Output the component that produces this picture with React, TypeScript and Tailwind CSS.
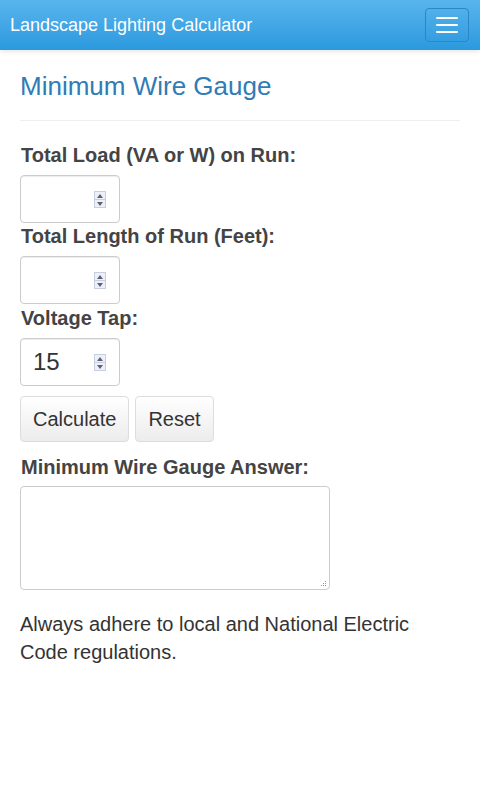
function Spinner() {
  return (
    <div className="absolute left-[73px] top-[15px] flex h-[17px] w-[12px] flex-col border border-[#c9cde0] bg-[#eef0f7]">
      <div className="flex flex-1 items-center justify-center border-b border-[#c9cde0]">
        <svg width="6" height="4" viewBox="0 0 6 4"><path d="M0 4 L3 0 L6 4 Z" fill="#5b6178" /></svg>
      </div>
      <div className="flex flex-1 items-center justify-center">
        <svg width="6" height="4" viewBox="0 0 6 4"><path d="M0 0 L3 4 L6 0 Z" fill="#5b6178" /></svg>
      </div>
    </div>
  );
}

function NumberField({ value }: { value?: string }) {
  return (
    <div className="relative h-[48px] w-[100px] rounded-[4px] border border-[#ccc] bg-white shadow-[inset_0_1px_1px_rgba(0,0,0,0.075)]">
      <span className="absolute left-[12px] top-[9px] text-[24px] leading-[28px] text-[#333]">{value}</span>
      <Spinner />
    </div>
  );
}

function Label({ children }: { children: string }) {
  return <div className="pl-px text-[20px] font-bold leading-[21px] text-[#444]">{children}</div>;
}

export default function App() {
  return (
    <div className="min-h-[800px] bg-white font-['Liberation_Sans',Arial,sans-serif]">
      <nav className="flex h-[50px] items-center justify-between bg-gradient-to-b from-[#58b5ec] to-[#2a99df] pl-[10px] pr-[11px] shadow-[0_1px_6px_rgba(0,0,0,0.12)]">
        <span className="text-[18px] leading-[20px] text-white">Landscape Lighting Calculator</span>
        <button className="flex h-[34px] w-[44px] flex-col items-center justify-center gap-[5px] rounded-[4px] border border-[#2d86c4]">
          <span className="block h-[2px] w-[22px] rounded-[1px] bg-white" />
          <span className="block h-[2px] w-[22px] rounded-[1px] bg-white" />
          <span className="block h-[2px] w-[22px] rounded-[1px] bg-white" />
        </button>
      </nav>

      <main className="px-[20px]">
        <h3 className="pt-[21px] text-[26px] leading-[30px] text-[#2f7cb6]">Minimum Wire Gauge</h3>
        <hr className="mt-[19px] border-t border-[#eee]" />

        <div className="mt-[24px] flex flex-col items-start">
          <Label>Total Load (VA or W) on Run:</Label>
          <div className="mt-[9px]"><NumberField /></div>
          <div className="mt-[3px]"><Label>Total Length of Run (Feet):</Label></div>
          <div className="mt-[9px]"><NumberField /></div>
          <div className="mt-[4px]"><Label>Voltage Tap:</Label></div>
          <div className="mt-[9px]"><NumberField value="15" /></div>

          <div className="mt-[10px] flex gap-[6px]">
            <button className="h-[46px] rounded-[4px] border border-[#ddd] bg-gradient-to-b from-white to-[#ececec] px-[12px] text-[20px] text-[#333]">Calculate</button>
            <button className="h-[46px] rounded-[4px] border border-[#ddd] bg-gradient-to-b from-white to-[#ececec] px-[12px] text-[20px] text-[#333]">Reset</button>
          </div>

          <div className="mt-[15px]"><Label>Minimum Wire Gauge Answer:</Label></div>
          <div className="relative mt-[8px] h-[104px] w-[310px] rounded-[4px] border border-[#ccc] bg-white">
            <textarea readOnly className="h-full w-full resize-none bg-transparent outline-none" />
            <svg className="absolute bottom-[2px] right-[2px]" width="7" height="7" viewBox="0 0 7 7">
              <rect x="5" y="1" width="1" height="1" fill="#999" />
              <rect x="3" y="3" width="1" height="1" fill="#999" />
              <rect x="5" y="3" width="1" height="1" fill="#999" />
              <rect x="1" y="5" width="1" height="1" fill="#999" />
              <rect x="3" y="5" width="1" height="1" fill="#999" />
              <rect x="5" y="5" width="1" height="1" fill="#999" />
            </svg>
          </div>

          <p className="mt-[20px] text-[20px] leading-[28px] text-[#333]">
            Always adhere to local and National Electric<br />Code regulations.
          </p>
        </div>
      </main>
    </div>
  );
}
